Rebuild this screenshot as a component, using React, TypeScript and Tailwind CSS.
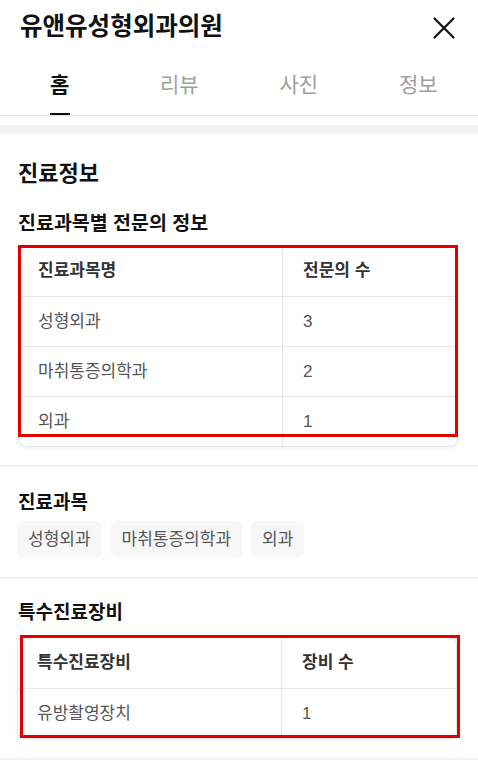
import React from "react";

const font = { fontFamily: '"Liberation Sans", "Noto Sans CJK KR", sans-serif' };

function Table({
  head,
  rows,
  className,
  redClass,
}: {
  head: [string, string];
  rows: [string, string][];
  className: string;
  redClass: string;
}) {
  return (
    <div className={`relative ${className}`}>
      <div className="rounded-lg border border-[#e6e6e6] shadow-[0_1px_3px_rgba(0,0,0,0.06)] overflow-hidden bg-white">
        <div className="flex h-[50px] items-center text-[17px] font-bold text-[#333]">
          <div className="w-[264px] h-full flex items-center pl-[19px] border-r border-[#e6e6e6]">{head[0]}</div>
          <div className="flex-1 h-full flex items-center pl-[20px]">{head[1]}</div>
        </div>
        {rows.map((r, i) => (
          <div key={i} className="flex h-[50px] items-center text-[17px] text-[#555] border-t border-[#e6e6e6]">
            <div className="w-[264px] h-full flex items-center pl-[19px] border-r border-[#e6e6e6]">{r[0]}</div>
            <div className="flex-1 h-full flex items-center pl-[20px]">{r[1]}</div>
          </div>
        ))}
      </div>
      <div className={`absolute border-[3px] border-[#e00000] pointer-events-none ${redClass}`} />
    </div>
  );
}

export default function App() {
  return (
    <div className="w-[478px] bg-white" style={font}>
      {/* Header */}
      <div className="flex items-center justify-between h-[55px] pl-5 pr-[23px]">
        <h1 className="text-[24.5px] font-bold leading-none text-[#111]">유앤유성형외과의원</h1>
        <svg width="22" height="22" viewBox="0 0 22 22" fill="none" stroke="#111" strokeWidth="2.2" strokeLinecap="round">
          <path d="M1.5 1.5 L20.5 20.5 M20.5 1.5 L1.5 20.5" />
        </svg>
      </div>
      {/* Tabs */}
      <div className="flex h-[61px] border-b border-[#e5e5e5]">
        {["홈", "리뷰", "사진", "정보"].map((t, i) => (
          <div
            key={t}
            className={`flex-1 relative flex items-center justify-center text-[21px] ${
              i === 0 ? "text-[#111] font-bold" : "text-[#a0a0a0]"
            }`}
          >
            {t}
            {i === 0 && <div className="absolute bottom-0 w-[20px] h-[2px] bg-[#111]" />}
          </div>
        ))}
      </div>
      <div className="h-[9px]" />
      <div className="h-[9px] bg-[#f2f2f2]" />

      {/* Section 1 */}
      <div className="pt-[29px] pb-[18px]">
        <h2 className="px-[18px] text-[22px] font-bold leading-[22px] text-[#111]">진료정보</h2>
        <h3 className="px-[18px] mt-[28px] text-[19.5px] font-bold leading-[20px] text-[#111]">진료과목별 전문의 정보</h3>
        <Table
          className="mt-[12px] ml-[18px] w-[440px]"
          redClass="left-0 top-0 w-[440px] h-[192px]"
          head={["진료과목명", "전문의 수"]}
          rows={[
            ["성형외과", "3"],
            ["마취통증의학과", "2"],
            ["외과", "1"],
          ]}
        />
      </div>
      <div className="h-[2px] bg-[#f2f2f2]" />

      {/* Section 2 */}
      <div className="pt-[26px] pb-[19px] px-[17px]">
        <h3 className="px-[1px] text-[19px] font-bold leading-[20px] text-[#111]">진료과목</h3>
        <div className="mt-[8px] flex gap-[9px]">
          {["성형외과", "마취통증의학과", "외과"].map((c) => (
            <div key={c} className="h-[37px] px-[11px] flex items-center rounded-md bg-[#f7f7f7] text-[17px] text-[#555]">
              {c}
            </div>
          ))}
        </div>
      </div>
      <div className="h-[2px] bg-[#f2f2f2]" />

      {/* Section 3 */}
      <div className="pt-[24px] pb-[19px]">
        <h3 className="px-[18px] text-[19px] font-bold leading-[20px] text-[#111]">특수진료장비</h3>
        <Table
          className="mt-[14px] ml-[17px] w-[440px]"
          redClass="left-[3px] top-[-2px] w-[440px] h-[103px]"
          head={["특수진료장비", "장비 수"]}
          rows={[["유방촬영장치", "1"]]}
        />
      </div>
      <div className="h-[2px] bg-[#f2f2f2]" />
      <div className="h-[40px]" />
    </div>
  );
}
